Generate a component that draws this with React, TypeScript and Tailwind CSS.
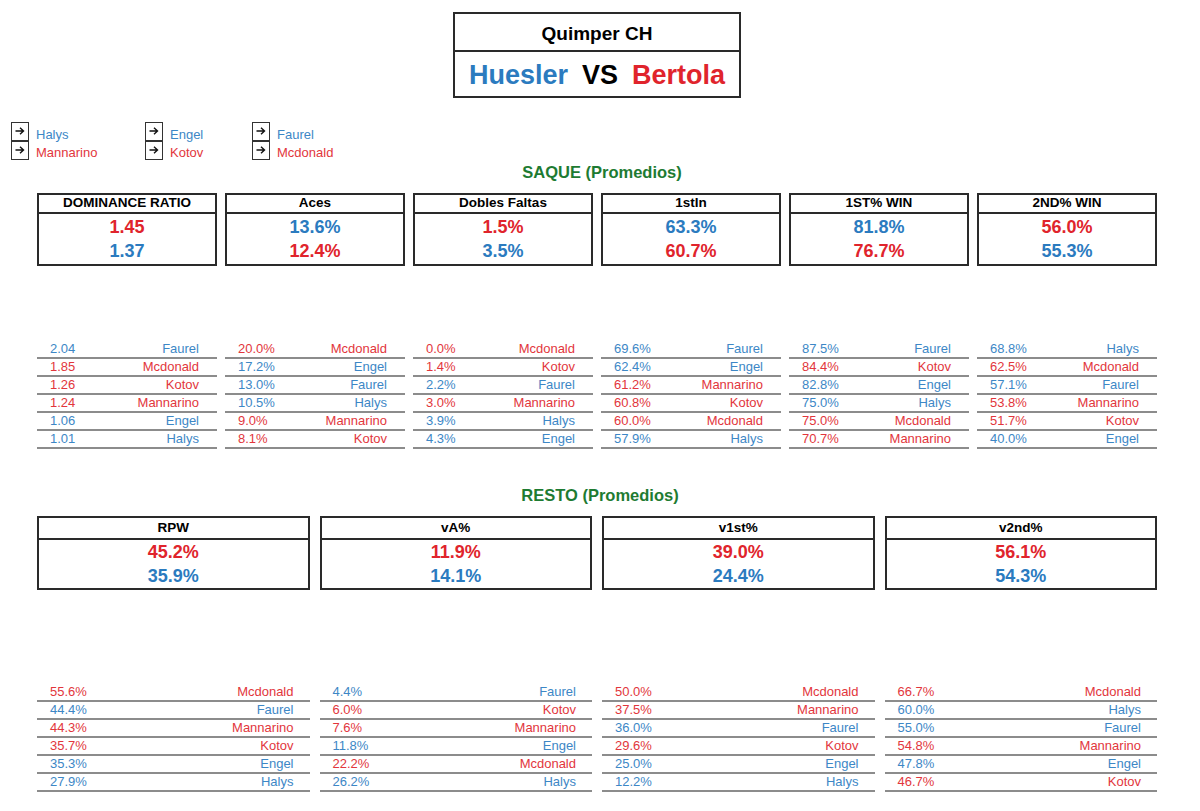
import React from "react";

const B = "text-[#2b7bbf]";
const R = "text-[#e0242c]";
const LB = "text-[#3d87c6]";
const LR = "text-[#e2363c]";

type C = "b" | "r";
type Row = [string, string, C];

const saque: { h: string; v: [string, C][]; rows: Row[] }[] = [
  {
    h: "DOMINANCE RATIO",
    v: [["1.45", "r"], ["1.37", "b"]],
    rows: [["2.04", "Faurel", "b"], ["1.85", "Mcdonald", "r"], ["1.26", "Kotov", "r"], ["1.24", "Mannarino", "r"], ["1.06", "Engel", "b"], ["1.01", "Halys", "b"]],
  },
  {
    h: "Aces",
    v: [["13.6%", "b"], ["12.4%", "r"]],
    rows: [["20.0%", "Mcdonald", "r"], ["17.2%", "Engel", "b"], ["13.0%", "Faurel", "b"], ["10.5%", "Halys", "b"], ["9.0%", "Mannarino", "r"], ["8.1%", "Kotov", "r"]],
  },
  {
    h: "Dobles Faltas",
    v: [["1.5%", "r"], ["3.5%", "b"]],
    rows: [["0.0%", "Mcdonald", "r"], ["1.4%", "Kotov", "r"], ["2.2%", "Faurel", "b"], ["3.0%", "Mannarino", "r"], ["3.9%", "Halys", "b"], ["4.3%", "Engel", "b"]],
  },
  {
    h: "1stIn",
    v: [["63.3%", "b"], ["60.7%", "r"]],
    rows: [["69.6%", "Faurel", "b"], ["62.4%", "Engel", "b"], ["61.2%", "Mannarino", "r"], ["60.8%", "Kotov", "r"], ["60.0%", "Mcdonald", "r"], ["57.9%", "Halys", "b"]],
  },
  {
    h: "1ST% WIN",
    v: [["81.8%", "b"], ["76.7%", "r"]],
    rows: [["87.5%", "Faurel", "b"], ["84.4%", "Kotov", "r"], ["82.8%", "Engel", "b"], ["75.0%", "Halys", "b"], ["75.0%", "Mcdonald", "r"], ["70.7%", "Mannarino", "r"]],
  },
  {
    h: "2ND% WIN",
    v: [["56.0%", "r"], ["55.3%", "b"]],
    rows: [["68.8%", "Halys", "b"], ["62.5%", "Mcdonald", "r"], ["57.1%", "Faurel", "b"], ["53.8%", "Mannarino", "r"], ["51.7%", "Kotov", "r"], ["40.0%", "Engel", "b"]],
  },
];

const resto: { h: string; v: [string, C][]; rows: Row[] }[] = [
  {
    h: "RPW",
    v: [["45.2%", "r"], ["35.9%", "b"]],
    rows: [["55.6%", "Mcdonald", "r"], ["44.4%", "Faurel", "b"], ["44.3%", "Mannarino", "r"], ["35.7%", "Kotov", "r"], ["35.3%", "Engel", "b"], ["27.9%", "Halys", "b"]],
  },
  {
    h: "vA%",
    v: [["11.9%", "r"], ["14.1%", "b"]],
    rows: [["4.4%", "Faurel", "b"], ["6.0%", "Kotov", "r"], ["7.6%", "Mannarino", "r"], ["11.8%", "Engel", "b"], ["22.2%", "Mcdonald", "r"], ["26.2%", "Halys", "b"]],
  },
  {
    h: "v1st%",
    v: [["39.0%", "r"], ["24.4%", "b"]],
    rows: [["50.0%", "Mcdonald", "r"], ["37.5%", "Mannarino", "r"], ["36.0%", "Faurel", "b"], ["29.6%", "Kotov", "r"], ["25.0%", "Engel", "b"], ["12.2%", "Halys", "b"]],
  },
  {
    h: "v2nd%",
    v: [["56.1%", "r"], ["54.3%", "b"]],
    rows: [["66.7%", "Mcdonald", "r"], ["60.0%", "Halys", "b"], ["55.0%", "Faurel", "b"], ["54.8%", "Mannarino", "r"], ["47.8%", "Engel", "b"], ["46.7%", "Kotov", "r"]],
  },
];

function StatBox({ h, v, headH }: { h: string; v: [string, C][]; headH: string }) {
  return (
    <div className="flex-1 border-2 border-[#2a2a2a] bg-white flex flex-col">
      <div className={`${headH} border-b-2 border-[#2a2a2a] flex items-center justify-center text-[13.5px] font-bold text-black`}>{h}</div>
      <div className="flex-1 flex flex-col items-center justify-center leading-[24px]">
        {v.map(([t, c], i) => (
          <div key={i} className={`text-[18px] font-bold ${c === "b" ? B : R}`}>{t}</div>
        ))}
      </div>
    </div>
  );
}

function Ranking({ rows, pr }: { rows: Row[]; pr: string }) {
  return (
    <div className="flex flex-col">
      {rows.map(([v, n, c], i) => (
        <div key={i} className={`h-[18px] flex items-end justify-between pl-[13px] ${pr} border-b-2 border-[#8c8c8c] text-[13px] leading-[16px] ${c === "b" ? LB : LR}`}>
          <span>{v}</span>
          <span>{n}</span>
        </div>
      ))}
    </div>
  );
}

function Arrow() {
  return (
    <div className="w-[18px] h-[19px] border border-[#333] flex items-start justify-center pt-[3px] bg-white">
      <svg width="12" height="10" viewBox="0 0 12 10">
        <path d="M1.5 5h8M6 1.8L9.5 5 6 8.2" stroke="#111" strokeWidth="1.4" fill="none" />
      </svg>
    </div>
  );
}

function Legend({ a, b, w }: { a: string; b: string; w: string }) {
  return (
    <div className={`flex ${w}`}>
      <div className="flex flex-col">
        <Arrow />
        <Arrow />
      </div>
      <div className="flex flex-col pl-[7px] text-[13px]">
        <div className={`h-[19px] flex items-center pt-[6px] ${LB}`}>{a}</div>
        <div className={`h-[19px] flex items-center pt-[4px] ${LR}`}>{b}</div>
      </div>
    </div>
  );
}

export default function App() {
  return (
    <div className="w-[1200px] h-[811px] bg-white overflow-hidden" style={{ fontFamily: '"Liberation Sans", Arial, sans-serif' }}>
      <div className="flex justify-center pt-[12px] pr-[6px]">
        <div className="w-[288px] h-[86px] border-2 border-[#2a2a2a] flex flex-col">
          <div className="h-[38px] border-b-2 border-[#2a2a2a] flex items-center justify-center text-[19px] font-bold text-black pt-[4px]">Quimper CH</div>
          <div className="flex-1 flex items-center justify-center gap-[14px] text-[27px] font-bold pt-[2px]">
            <span className={B}>Huesler</span>
            <span className="text-black">VS</span>
            <span className={R}>Bertola</span>
          </div>
        </div>
      </div>

      <div className="flex pl-[11px] pt-[24px]">
        <Legend a="Halys" b="Mannarino" w="w-[134px]" />
        <Legend a="Engel" b="Kotov" w="w-[107px]" />
        <Legend a="Faurel" b="Mcdonald" w="w-[100px]" />
      </div>

      <div className="text-center text-[16.5px] font-bold text-[#1e7b32] leading-[20px] mt-[2px] pl-[4px]">SAQUE (Promedios)</div>

      <div className="px-[37px] pr-[43px]">
        <div className="grid grid-cols-6 gap-x-[8px] mt-[11px]">
          {saque.map((s, i) => (
            <div key={i} className="h-[73px] flex flex-col">
              <StatBox h={s.h} v={s.v} headH="h-[19px]" />
            </div>
          ))}
        </div>
        <div className="grid grid-cols-6 gap-x-[8px] mt-[75px]">
          {saque.map((s, i) => (
            <Ranking key={i} rows={s.rows} pr="pr-[18px]" />
          ))}
        </div>
      </div>

      <div className="text-center text-[16.5px] font-bold text-[#1e7b32] leading-[20px] mt-[36px]">RESTO (Promedios)</div>

      <div className="px-[37px] pr-[43px]">
        <div className="grid grid-cols-4 gap-x-[10px] mt-[11px]">
          {resto.map((s, i) => (
            <div key={i} className="h-[74px] flex flex-col">
              <StatBox h={s.h} v={s.v} headH="h-[22px]" />
            </div>
          ))}
        </div>
        <div className="grid grid-cols-4 gap-x-[10px] mt-[94px]">
          {resto.map((s, i) => (
            <Ranking key={i} rows={s.rows} pr="pr-[16px]" />
          ))}
        </div>
      </div>
    </div>
  );
}
